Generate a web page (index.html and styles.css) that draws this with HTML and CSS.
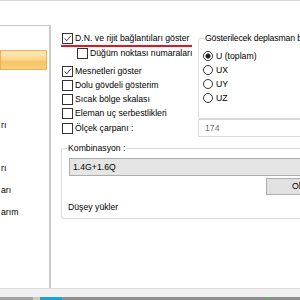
FILE: index.html
```html
<!DOCTYPE html>
<html lang="tr">
<head>
    <meta charset="UTF-8">
    <meta name="viewport" content="width=device-width, initial-scale=1.0">
    <title>Görünüm ayarları</title>
    <link rel="stylesheet" href="styles.css">
</head>
<body>

<div class="window">
    <div class="tree">
        <div class="tree-item selected"></div>
        <div class="tree-item"></div>
        <div class="tree-item"></div>
        <div class="tree-item">rı</div>
        <div class="tree-item"></div>
        <div class="tree-item">rı</div>
        <div class="tree-item">arı</div>
        <div class="tree-item">arım</div>
    </div>

    <div class="options">
        <div class="options-top">
            <div class="checks">
                <label class="check">
                    <span class="box"><svg viewBox="0 0 9 9" width="9" height="9"><path d="M1.5 4.5 L3.7 6.8 L7.8 1.8" fill="none" stroke="#444" stroke-width="1"/></svg></span>
                    D.N. ve rijit bağlantıları göster
                </label>
                <label class="check sub">
                    <span class="box"></span>
                    Düğüm noktası numaraları
                </label>
                <label class="check spaced">
                    <span class="box"><svg viewBox="0 0 9 9" width="9" height="9"><path d="M1.5 4.5 L3.7 6.8 L7.8 1.8" fill="none" stroke="#444" stroke-width="1"/></svg></span>
                    Mesnetleri göster
                </label>
                <label class="check">
                    <span class="box"></span>
                    Dolu gövdeli gösterim
                </label>
                <label class="check">
                    <span class="box"></span>
                    Sıcak bölge skalası
                </label>
                <label class="check">
                    <span class="box"></span>
                    Eleman uç serbestlikleri
                </label>
            </div>

            <fieldset class="group displacement">
                <legend>Gösterilecek deplasman bileşeni</legend>
                <label class="radio">
                    <svg viewBox="0 0 10 10" width="10" height="10"><circle cx="5" cy="5" r="4.5" fill="#fff" stroke="#333"/><circle cx="5" cy="5" r="2.5" fill="#222"/></svg>
                    U (toplam)
                </label>
                <label class="radio">
                    <svg viewBox="0 0 10 10" width="10" height="10"><circle cx="5" cy="5" r="4.5" fill="#fff" stroke="#333"/></svg>
                    UX
                </label>
                <label class="radio">
                    <svg viewBox="0 0 10 10" width="10" height="10"><circle cx="5" cy="5" r="4.5" fill="#fff" stroke="#333"/></svg>
                    UY
                </label>
                <label class="radio">
                    <svg viewBox="0 0 10 10" width="10" height="10"><circle cx="5" cy="5" r="4.5" fill="#fff" stroke="#333"/></svg>
                    UZ
                </label>
            </fieldset>
        </div>

        <div class="scale-row">
            <label class="check scale-label">
                <span class="box"></span>
                Ölçek çarpanı :
            </label>
            <div class="textbox">174</div>
        </div>

        <fieldset class="group combination">
            <legend>Kombinasyon :</legend>
            <div class="combo">1.4G+1.6Q</div>
            <div class="button">Oluştur</div>
            <div class="note">Düşey yükler</div>
        </fieldset>
    </div>

    <!-- red annotation under the first option -->
    <div class="red-mark"></div>
</div>

<div class="status-strip"></div>

<div class="taskbar">
    <span class="task-left"></span>
    <span class="task-gap"></span>
    <span class="task-active"></span>
    <span class="task-rest"></span>
    <span class="tray-dot"></span>
</div>

</body>
</html>
```

FILE: styles.css
```css
body {
    margin: 0;
    width: 300px;
    height: 300px;
    overflow: hidden;
    background-color: #ffffff;
    color: #000000;
    font-family: "Liberation Sans", Arial, sans-serif;
    font-size: 8.7px;
    line-height: 11px;
}

.window {
    position: relative;
    display: flex;
    width: 360px;
    height: 287px;
    border-top: 1px solid #d6d6d6;
    border-bottom: 1px solid #dadada;
}

/* left navigation tree, scrolled so only label ends show */
.tree {
    width: 49px;
    margin-top: 24px;
    padding-top: 24px;
    border-top: 1px solid #c8c8c8;
    border-right: 2px solid #cbcbcb;
    overflow: hidden;
}

.tree-item {
    height: 21.7px;
    line-height: 21.7px;
    padding-left: 1px;
    white-space: nowrap;
}

.tree-item.selected {
    height: 18px;
    width: 44px;
    margin-bottom: 1.7px;
    border: 1px solid #e4b25e;
    background: linear-gradient(to bottom, #fee8b6 0%, #fdd993 45%, #f9c465 60%, #fbcf78 100%);
}

.options {
    flex: 1;
    padding-top: 32px;
    padding-left: 10px;
}

.options-top {
    display: flex;
}

.checks {
    width: 136px;
    padding-left: 1px;
    display: flex;
    flex-direction: column;
    gap: 3px;
}

.check {
    display: flex;
    align-items: center;
    height: 11px;
    white-space: nowrap;
}

.check.sub {
    margin-top: 1px;
    padding-left: 15px;
}

.check.spaced {
    margin-top: 4px;
}

.box {
    box-sizing: border-box;
    width: 11px;
    height: 11px;
    margin-right: 2px;
    border: 1px solid #333333;
    background-color: #ffffff;
    display: flex;
    flex: 0 0 11px;
}

/* group boxes */
.group {
    margin: 0;
    padding: 0 0 0 5px;
    border: 1px solid #dcdcdc;
    border-radius: 2px;
    min-width: 0;
}

.group legend {
    padding: 0 1px;
    line-height: 11px;
    white-space: nowrap;
}

.displacement legend {
    letter-spacing: -0.15px;
}

.displacement {
    flex: 1;
    padding-top: 7px;
    padding-bottom: 6px;
    display: flex;
    flex-direction: column;
    gap: 4px;
}

.radio {
    display: flex;
    align-items: center;
    height: 10px;
    gap: 3px;
    margin-left: -1px;
}

.scale-row {
    display: flex;
    align-items: center;
    height: 18px;
}

.scale-label {
    width: 136px;
    padding-left: 1px;
}

.textbox {
    flex: 1;
    box-sizing: border-box;
    height: 18px;
    line-height: 16px;
    padding-left: 6px;
    border: 1px solid #d9d9d9;
    color: #6d6d6d;
}

.combination {
    margin-top: 6px;
    padding-bottom: 5px;
}

.combo {
    box-sizing: border-box;
    height: 18px;
    margin-top: 4px;
    margin-left: 2px;
    padding-left: 3px;
    line-height: 16px;
    border: 1px solid #adadad;
    background-color: #e5e5e5;
}

.button {
    box-sizing: border-box;
    width: 80px;
    height: 17px;
    margin-top: 2px;
    margin-left: 199px;
    padding-left: 25px;
    line-height: 15px;
    border: 1px solid #adadad;
    background-color: #e1e1e1;
}

.note {
    margin-top: 7px;
    padding-left: 1px;
}

.red-mark {
    position: absolute;
    left: 61px;
    top: 44px;
    width: 131px;
    height: 2px;
    background-color: #e3161d;
}

.status-strip {
    height: 8px;
    background-color: #f0f0f0;
}

.taskbar {
    display: flex;
    height: 4px;
    background-color: #8f8f8f;
}

.task-left {
    width: 33px;
    background-color: #a3a3a3;
}

.task-gap {
    width: 7px;
    background-color: #c9c9c9;
}

.task-active {
    width: 22px;
    background-color: #1aa3d6;
}

.task-rest {
    width: 205px;
}

.tray-dot {
    width: 1px;
    background-color: #37d23f;
}
```
